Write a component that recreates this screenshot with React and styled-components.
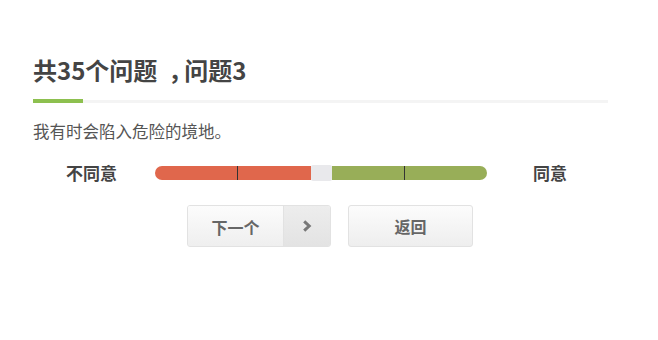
import React from "react";
import styled, { createGlobalStyle } from "styled-components";

const GlobalStyle = createGlobalStyle`
  body {
    margin: 0;
    background: #fff;
    font-family: "Noto Sans CJK SC", "Noto Sans", sans-serif;
  }
`;

const Wrapper = styled.div`
  width: 575px;
  padding: 55px 0 0 33px;
`;

const Header = styled.div`
  position: relative;
  padding-bottom: 15px;
  border-bottom: 3px solid #f4f4f4;
  &::after {
    content: "";
    position: absolute;
    left: 0;
    bottom: -3px;
    width: 50px;
    height: 4px;
    background: #8dc04f;
  }
`;

const Title = styled.h1`
  margin: 0;
  font-size: 24px;
  line-height: 30px;
  font-weight: 700;
  color: #444;
`;

const Punct = styled.span`
  padding: 0 6px 0 11px;
  letter-spacing: -14px;
`;

const Question = styled.p`
  margin: 17px 0 0;
  font-size: 16.5px;
  line-height: 22px;
  color: #555;
`;

const ScaleRow = styled.div`
  display: flex;
  align-items: center;
  margin: 21px 0 0 33px;
  height: 20px;
`;

const Label = styled.span`
  width: ${(p) => p.$width}px;
  font-size: 17px;
  line-height: 20px;
  font-weight: 700;
  color: #444;
`;

const Track = styled.div`
  position: relative;
  display: flex;
  width: 332px;
  height: 14px;
  margin-right: 46px;
`;

const Segment = styled.div`
  flex: 1;
  background: ${(p) => p.$color};
  border-radius: ${(p) => (p.$side === "left" ? "7px 0 0 7px" : "0 7px 7px 0")};
`;

const Tick = styled.span`
  position: absolute;
  top: 0;
  width: 1px;
  height: 14px;
  background: #333;
`;

const Handle = styled.div`
  width: 21px;
  margin: -1px 0;
  background: #e9e9ec;
  border-radius: 2px;
`;

const ButtonRow = styled.div`
  display: flex;
  gap: 17px;
  margin: 22px 0 0 154px;
`;

const ButtonGroup = styled.div`
  display: flex;
  height: 42px;
  border: 1px solid #e2e2e2;
  border-radius: 3px;
  overflow: hidden;
  background: linear-gradient(#fcfcfc, #eeeeee);
  box-sizing: border-box;
`;

const Button = styled.button`
  width: ${(p) => p.$width}px;
  height: 42px;
  padding: 0;
  border: ${(p) => (p.$plain ? "none" : "1px solid #e2e2e2")};
  border-radius: ${(p) => (p.$plain ? "0" : "3px")};
  background: linear-gradient(#fcfcfc, #eeeeee);
  font-family: inherit;
  font-size: 16px;
  font-weight: 700;
  color: #666;
  box-sizing: border-box;
  cursor: pointer;
`;

const ArrowButton = styled.button`
  width: 47px;
  padding: 0;
  border: none;
  border-left: 1px solid #e2e2e2;
  background: linear-gradient(#ededed, #e3e3e3);
  display: flex;
  align-items: center;
  justify-content: center;
  cursor: pointer;
`;

export default function App() {
  return (
    <>
      <GlobalStyle />
      <Wrapper>
        <Header>
          <Title>
            共35个问题<Punct>，</Punct>问题3
          </Title>
        </Header>
        <Question>我有时会陷入危险的境地。</Question>
        <ScaleRow>
          <Label $width={89}>不同意</Label>
          <Track>
            <Segment $color="#e0674c" $side="left" />
            <Handle />
            <Segment $color="#98ae58" $side="right" />
            <Tick style={{ left: "24.7%" }} />
            <Tick style={{ left: "75%" }} />
          </Track>
          <Label $width={40}>同意</Label>
        </ScaleRow>
        <ButtonRow>
          <ButtonGroup>
            <Button $plain $width={95}>下一个</Button>
            <ArrowButton>
              <svg width="10" height="12" viewBox="0 0 10 12">
                <path d="M2.2 1.3 L7.2 6 L2.2 10.7" fill="none" stroke="#777" strokeWidth="3" />
              </svg>
            </ArrowButton>
          </ButtonGroup>
          <Button $width={125}>返回</Button>
        </ButtonRow>
      </Wrapper>
    </>
  );
}
